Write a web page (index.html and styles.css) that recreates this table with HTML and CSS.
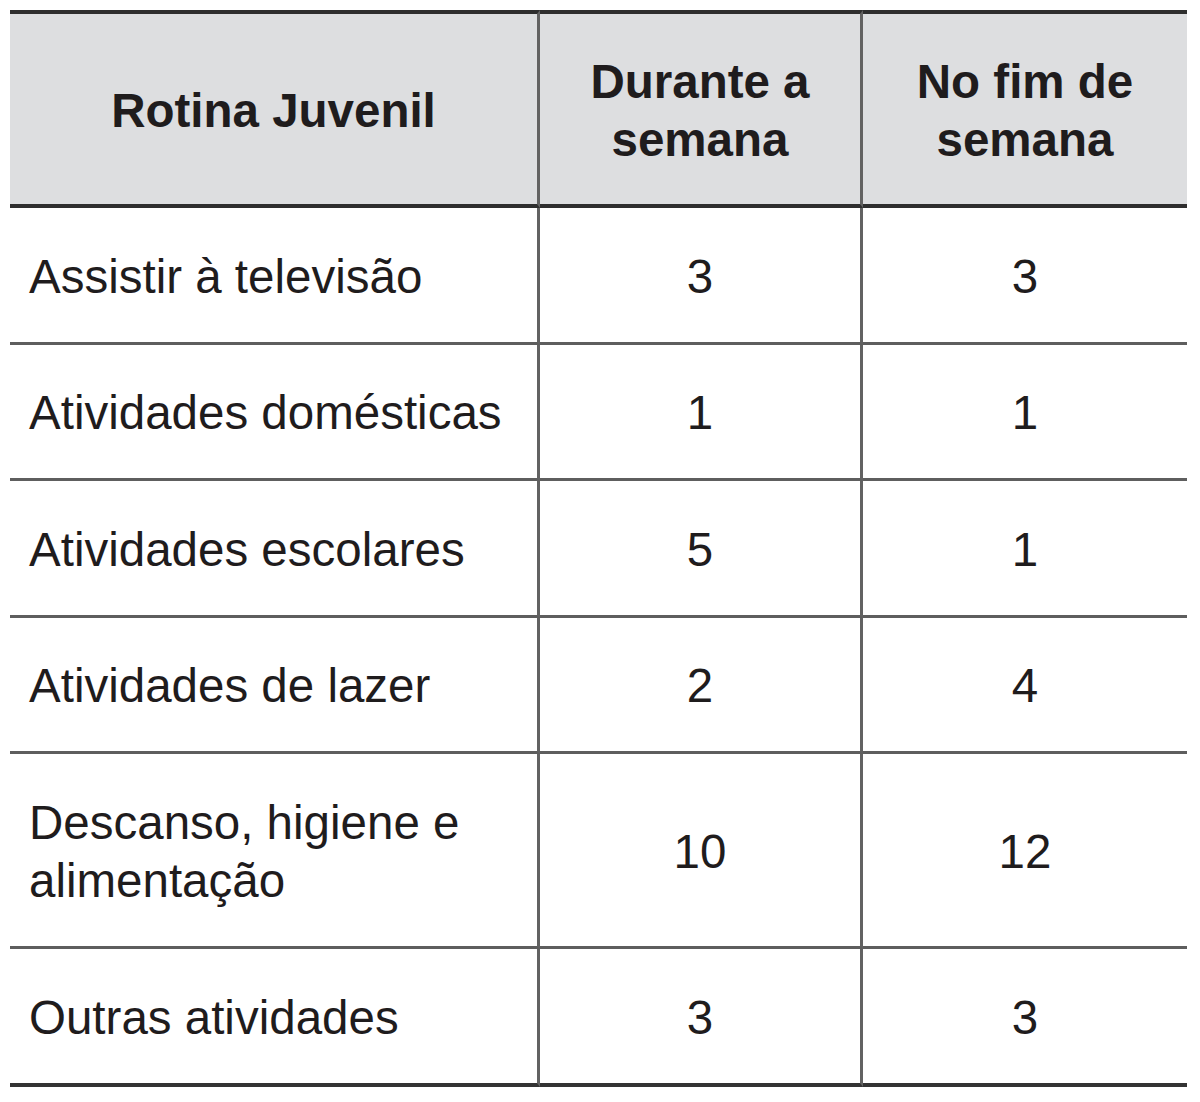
FILE: index.html
```html
<!DOCTYPE html>
<html lang="pt">
<head>
<meta charset="utf-8">
<title>Rotina Juvenil</title>
<link rel="stylesheet" href="styles.css">
</head>
<body>
<table class="rotina">
  <thead>
    <tr>
      <th class="c1">Rotina Juvenil</th>
      <th class="c2">Durante a<br>semana</th>
      <th class="c3">No fim de<br>semana</th>
    </tr>
  </thead>
  <tbody>
    <tr><td class="c1">Assistir à televisão</td><td class="c2">3</td><td class="c3">3</td></tr>
    <tr><td class="c1">Atividades domésticas</td><td class="c2">1</td><td class="c3">1</td></tr>
    <tr><td class="c1">Atividades escolares</td><td class="c2">5</td><td class="c3">1</td></tr>
    <tr><td class="c1">Atividades de lazer</td><td class="c2">2</td><td class="c3">4</td></tr>
    <tr class="tall"><td class="c1">Descanso, higiene e<br>alimentação</td><td class="c2">10</td><td class="c3">12</td></tr>
    <tr class="last"><td class="c1">Outras atividades</td><td class="c2">3</td><td class="c3">3</td></tr>
  </tbody>
</table>
</body>
</html>
```
FILE: styles.css
```css
html, body {
  margin: 0;
  padding: 0;
  background: #ffffff;
}
body {
  padding: 10px 0 0 10px;
  font-family: "Liberation Sans", Arial, sans-serif;
  color: #1f1c1d;
}
.rotina {
  border-collapse: separate;
  border-spacing: 0;
  table-layout: fixed;
  width: 1177px;
  font-size: 47.5px;
  line-height: 58px;
}
.rotina th, .rotina td {
  padding: 0;
  vertical-align: middle;
  box-sizing: content-box;
}
.rotina th {
  background: #dddee0;
  font-weight: bold;
  text-align: center;
  height: 186px;
  padding-top: 4px;
  border-top: 4px solid #2e2e2e;
  border-bottom: 4px solid #2e2e2e;
}
.rotina .c1 { width: 527px; border-right: 3px solid #626262; }
.rotina .c2 { width: 320px; border-right: 3px solid #626262; text-align: center; }
.rotina .c3 { width: 324px; text-align: center; }
.rotina td {
  height: 129.5px;
  padding-top: 4px;
  border-bottom: 3px solid #5e5e5e;
}
.rotina td.c1 {
  text-align: left;
  padding-left: 19px;
  width: 508px;
}
.rotina tr.tall td { height: 188px; }
.rotina tr.last td {
  height: 130px;
  border-bottom: 4px solid #333333;
}
```
